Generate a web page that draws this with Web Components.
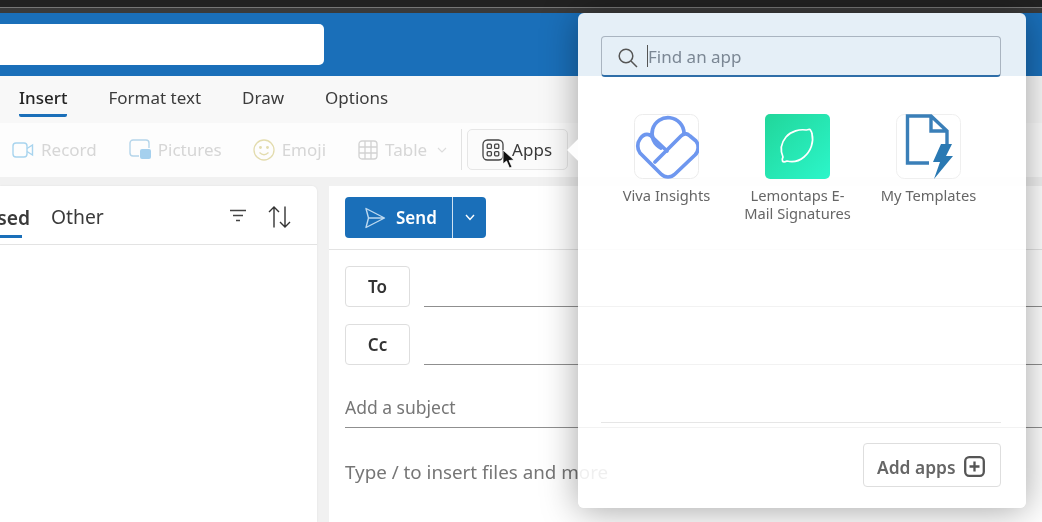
<!DOCTYPE html>
<html lang="en">
<head>
<meta charset="utf-8">
<title>Mail compose</title>
<style>
    html, body { margin: 0; padding: 0; background: #f1f1f1; overflow: hidden; }
    body { font-family: "Noto Sans", "Open Sans", sans-serif; }
</style>
</head>
<body>
<outlook-app>
    <blue-header slot="header"></blue-header>
    <ribbon-tabs slot="tabs"></ribbon-tabs>
    <ribbon-toolbar slot="toolbar"></ribbon-toolbar>
    <list-pane slot="list"></list-pane>
    <compose-pane slot="compose"></compose-pane>
    <app-picker slot="popup"></app-picker>
</outlook-app>

<script>
class OutlookApp extends HTMLElement {
    constructor() {
        super();
        this.attachShadow({ mode: 'open' });
        this.shadowRoot.innerHTML = `
            <style>
                :host {
                    display: flex;
                    flex-direction: column;
                    position: relative;
                    width: 1042px;
                    height: 522px;
                    overflow: hidden;
                    background: #f1f1f1;
                    filter: blur(0.4px);
                }
                .chrome {
                    height: 13px;
                    flex: none;
                    box-sizing: border-box;
                    background: linear-gradient(#222 0 7px, #777 7px 8px, #3a3a3a 8px);
                }
                .work {
                    flex: 1;
                    min-height: 0;
                    display: grid;
                    grid-template-columns: 317px 1fr;
                    gap: 12px;
                    padding-top: 9px;
                }
                .cursor {
                    position: absolute;
                    left: 502px;
                    top: 149px;
                }
            </style>
            <div class="chrome"></div>
            <slot name="header"></slot>
            <slot name="tabs"></slot>
            <slot name="toolbar"></slot>
            <div class="work">
                <slot name="list"></slot>
                <slot name="compose"></slot>
            </div>
            <slot name="popup"></slot>
            <svg class="cursor" width="14" height="22" viewBox="0 0 14 22">
                <path d="M1 1 L1 15 L4.5 12 L7.5 19 L10 18 L7 11.5 L12 11 Z" fill="#111" stroke="#fff" stroke-width="0.8"/>
            </svg>
        `;
    }
}

class BlueHeader extends HTMLElement {
    constructor() {
        super();
        this.attachShadow({ mode: 'open' });
        this.shadowRoot.innerHTML = `
            <style>
                :host {
                    display: block;
                    height: 63px;
                    box-sizing: border-box;
                    padding-top: 11px;
                    background: #1a6fb9;
                }
                .search {
                    width: 324px;
                    height: 41px;
                    background: #fff;
                    border-radius: 0 5px 5px 0;
                }
            </style>
            <div class="search"></div>
        `;
    }
}

class RibbonTabs extends HTMLElement {
    constructor() {
        super();
        this.attachShadow({ mode: 'open' });
        this.shadowRoot.innerHTML = `
            <style>
                :host {
                    display: flex;
                    gap: 41px;
                    height: 47px;
                    box-sizing: border-box;
                    padding: 10px 0 0 19px;
                    background: #f8f8f8;
                    font-size: 17px;
                    line-height: 23px;
                    color: #3c3c3c;
                }
                .active {
                    height: 31px;
                    font-weight: 500;
                    color: #242424;
                    border-bottom: 3px solid #1a6fb9;
                    border-radius: 0 0 2px 2px;
                    box-sizing: border-box;
                }
            </style>
            <span class="active">Insert</span>
            <span>Format text</span>
            <span>Draw</span>
            <span>Options</span>
        `;
    }
}

class RibbonToolbar extends HTMLElement {
    constructor() {
        super();
        this.attachShadow({ mode: 'open' });
        this.shadowRoot.innerHTML = `
            <style>
                :host {
                    display: flex;
                    align-items: center;
                    height: 54px;
                    box-sizing: border-box;
                    padding: 0 0 1px 12px;
                    background: #fdfdfd;
                    font-size: 17px;
                    color: #d6d6d6;
                }
                .item { display: flex; align-items: center; gap: 7px; margin-right: 32px; }
                .item svg { display: block; flex: none; }
                .pictures { margin-right: 31px; gap: 6px; }
                .table { margin-right: 14px; }
                .table .chev { margin-left: 3px; }
                .divider { width: 1px; height: 41px; background: #e2e2e2; margin-right: 5px; }
                .apps {
                    display: flex;
                    align-items: center;
                    gap: 8px;
                    width: 101px;
                    height: 41px;
                    box-sizing: border-box;
                    padding-left: 14px;
                    border: 1px solid #e6e6e6;
                    border-radius: 5px;
                    background: #fbfbfb;
                    color: #3a3a3a;
                }
            </style>
            <span class="item">
                <svg width="22" height="18" viewBox="0 0 22 18" fill="none" stroke="#a8d4ee" stroke-width="1.4">
                    <rect x="1" y="2" width="14" height="14" rx="3"/>
                    <path d="M15 7.5 L20.5 4 V14 L15 10.5"/>
                </svg>
                Record
            </span>
            <span class="item pictures">
                <svg width="23" height="21" viewBox="0 0 23 21" fill="none">
                    <path d="M10 17 H4 a3 3 0 0 1 -3 -3 V4 a3 3 0 0 1 3 -3 H17 a3 3 0 0 1 3 3 V9" stroke="#b5d5ea" stroke-width="1.4"/>
                    <rect x="11" y="10" width="11" height="10" rx="2" fill="#a5d0ee"/>
                </svg>
                Pictures
            </span>
            <span class="item">
                <svg width="22" height="22" viewBox="0 0 22 22" fill="none" stroke="#e3dcae" stroke-width="1.3">
                    <circle cx="11" cy="11" r="10"/>
                    <circle cx="7.5" cy="8.5" r="0.8" fill="#d8d3ad"/>
                    <circle cx="14.5" cy="8.5" r="0.8" fill="#d8d3ad"/>
                    <path d="M6.5 13.5 Q11 18 15.5 13.5"/>
                </svg>
                Emoji
            </span>
            <span class="item table">
                <svg width="20" height="20" viewBox="0 0 20 20" fill="none" stroke="#d2d2d2" stroke-width="1.3">
                    <rect x="1" y="1" width="18" height="18" rx="3"/>
                    <path d="M7 1 V19 M13 1 V19 M1 7 H19 M1 13 H19"/>
                </svg>
                Table
                <svg class="chev" width="10" height="6" viewBox="0 0 10 6" fill="none" stroke="#dcdcdc" stroke-width="1.1">
                    <path d="M1 1 L5 5 L9 1"/>
                </svg>
            </span>
            <span class="divider"></span>
            <span class="apps">
                <svg width="22" height="22" viewBox="0 0 22 22" fill="none" stroke="#444" stroke-width="1.3">
                    <rect x="1" y="1" width="20" height="20" rx="4.5"/>
                    <rect x="5.2" y="5.2" width="4.2" height="4.2" rx="1"/>
                    <rect x="12.6" y="5.2" width="4.2" height="4.2" rx="1"/>
                    <rect x="5.2" y="12.6" width="4.2" height="4.2" rx="1"/>
                    <rect x="12.6" y="12.6" width="4.2" height="4.2" rx="1"/>
                </svg>
                Apps
            </span>
        `;
    }
}

class ListPane extends HTMLElement {
    constructor() {
        super();
        this.attachShadow({ mode: 'open' });
        this.shadowRoot.innerHTML = `
            <style>
                :host {
                    display: block;
                    height: 100%;
                    background: #fff;
                    border-radius: 0 5px 0 0;
                    box-shadow: 0 0 2px rgba(0,0,0,.08);
                }
                .head {
                    display: flex;
                    align-items: center;
                    height: 59px;
                    box-sizing: border-box;
                    padding-top: 3px;
                    border-bottom: 1px solid #e3e3e3;
                    font-size: 19.3px;
                    color: #3a3a3a;
                }
                .focused {
                    display: flex;
                    justify-content: flex-end;
                    align-self: flex-start;
                    box-sizing: border-box;
                    width: 30px;
                    height: 55px;
                    padding-top: 16px;
                    line-height: 25px;
                    overflow: hidden;
                    white-space: nowrap;
                    font-weight: 600;
                    position: relative;
                }
                .focused::after {
                    content: "";
                    position: absolute;
                    left: 0;
                    bottom: 6px;
                    width: 22px;
                    height: 3px;
                    background: #1a6fb9;
                }
                .other { margin-left: 21px; }
                .filter { margin: 0 0 2px auto; }
                .sort { margin: 0 26px 0 21px; }
                svg { display: block; }
            </style>
            <div class="head">
                <span class="focused">Focused</span>
                <span class="other">Other</span>
                <svg class="filter" width="18" height="14" viewBox="0 0 18 14" fill="none" stroke="#444" stroke-width="1.3">
                    <path d="M1 1.5 H17 M4 6.5 H14 M7 11.5 H11"/>
                </svg>
                <svg class="sort" width="23" height="22" viewBox="0 0 23 22" fill="none" stroke="#333" stroke-width="1.4">
                    <path d="M6 21.5 V1 M1 6 L6 1 L11 6 M17 0.5 V21 M12 16 L17 21 L22 16"/>
                </svg>
            </div>
        `;
    }
}

class ComposePane extends HTMLElement {
    constructor() {
        super();
        this.attachShadow({ mode: 'open' });
        this.shadowRoot.innerHTML = `
            <style>
                :host {
                    display: block;
                    height: 100%;
                    background: #fff;
                    font-size: 17px;
                    color: #666;
                }
                .bar {
                    height: 64px;
                    box-sizing: border-box;
                    padding: 11px 0 0 16px;
                    border-bottom: 1px solid #e3e3e3;
                }
                .send {
                    display: inline-flex;
                    width: 141px;
                    height: 41px;
                    border-radius: 4px;
                    background: #1a6fb9;
                    color: #fff;
                    font-weight: 600;
                }
                .send-main {
                    display: flex;
                    align-items: center;
                    gap: 10px;
                    width: 108px;
                    box-sizing: border-box;
                    padding-left: 19px;
                    border-right: 1px solid #cfe2f2;
                }
                .send-drop {
                    flex: 1;
                    display: flex;
                    align-items: center;
                    justify-content: center;
                }
                .rows { padding-left: 16px; }
                .row {
                    display: flex;
                    align-items: stretch;
                    gap: 14px;
                    height: 41px;
                    margin-top: 17px;
                }
                .row.first { margin-top: 16px; }
                .label {
                    width: 65px;
                    box-sizing: border-box;
                    display: flex;
                    align-items: center;
                    justify-content: center;
                    border: 1px solid #dedede;
                    border-radius: 4px;
                    font-weight: 600;
                    color: #333;
                }
                .line { flex: 1; border-bottom: 1px solid #8f8f8f; }
                .subject {
                    height: 47px;
                    margin-top: 16px;
                    box-sizing: border-box;
                    padding-top: 16px;
                    line-height: 20px;
                    font-size: 17.5px;
                    border-bottom: 1px solid #8f8f8f;
                    color: #767676;
                }
                .body { margin-top: 33px; line-height: 22px; font-size: 18.8px; color: #767676; white-space: nowrap; }
            </style>
            <div class="bar">
                <div class="send">
                    <span class="send-main">
                        <svg width="22" height="22" viewBox="0 0 22 22" fill="none" stroke="#bcd9f0" stroke-width="1.4" stroke-linejoin="round">
                            <path d="M2 1.5 L20.5 11 L2 20.5 L4.5 11 Z M4.5 11 H20.5"/>
                        </svg>
                        Send
                    </span>
                    <span class="send-drop">
                        <svg width="10" height="7" viewBox="0 0 10 7" fill="none" stroke="#fff" stroke-width="1.4"><path d="M1 1 L5 5.5 L9 1"/></svg>
                    </span>
                </div>
            </div>
            <div class="rows">
                <div class="row first"><span class="label">To</span><span class="line"></span></div>
                <div class="row"><span class="label">Cc</span><span class="line"></span></div>
                <div class="subject">Add a subject</div>
                <div class="body">Type / to insert files and more</div>
            </div>
        `;
    }
}

class AppTile extends HTMLElement {
    constructor() {
        super();
        this.attachShadow({ mode: 'open' });
        this.shadowRoot.innerHTML = `
            <style>
                :host {
                    display: flex;
                    flex-direction: column;
                    align-items: center;
                    width: 131px;
                    font-size: 14.7px;
                    line-height: 18px;
                    color: #666;
                    text-align: center;
                }
                .icon {
                    width: 65px;
                    height: 65px;
                    box-sizing: border-box;
                    margin-bottom: 7px;
                }
                .label { width: 116px; }
            </style>
            <div class="icon"><slot name="icon"></slot></div>
            <div class="label"><slot></slot></div>
        `;
    }
}

class AppPicker extends HTMLElement {
    constructor() {
        super();
        this.attachShadow({ mode: 'open' });
        this.shadowRoot.innerHTML = `
            <style>
                :host {
                    position: absolute;
                    left: 578px;
                    top: 13px;
                    width: 448px;
                    height: 495px;
                    box-sizing: border-box;
                    padding: 23px 25px 21px 23px;
                    display: flex;
                    flex-direction: column;
                    background: rgba(255,255,255,.885);
                    border-radius: 6px;
                    box-shadow: 0 2px 36px rgba(0,0,0,.36);
                }
                .beak {
                    position: absolute;
                    left: -8px;
                    top: 129px;
                    width: 16px;
                    height: 16px;
                    background: #fdfdfd;
                    transform: rotate(45deg);
                    clip-path: polygon(0 0, 0 100%, 100% 100%);
                }
                .find {
                    display: flex;
                    align-items: center;
                    height: 41px;
                    flex: none;
                    box-sizing: border-box;
                    padding-left: 16px;
                    border: 1px solid #a9b4c0;
                    border-bottom: 2px solid #2f6ea8;
                    border-radius: 4px;
                    font-size: 17px;
                    color: #7b8794;
                }
                .find svg { margin-top: 3px; }
                .caret { width: 1px; height: 22px; background: #555; margin: 0 0 0 9px; }
                .grid {
                    display: flex;
                    margin: 37px 0 0 0;
                    flex: 1;
                }
                .foot {
                    flex: none;
                    display: flex;
                    justify-content: flex-end;
                    border-top: 1px solid #e6e6e6;
                    padding-top: 20px;
                }
                .add {
                    display: flex;
                    align-items: center;
                    gap: 8px;
                    width: 138px;
                    height: 44px;
                    box-sizing: border-box;
                    padding: 3px 0 0 13px;
                    border: 1px solid #dedede;
                    border-radius: 4px;
                    background: #fff;
                    font-size: 17.4px;
                    font-weight: 600;
                    color: #666;
                }
                .tile {
                    display: block;
                    width: 65px;
                    height: 65px;
                }
            </style>
            <div class="beak"></div>
            <div class="find">
                <svg width="20" height="20" viewBox="0 0 20 20" fill="none" stroke="#555" stroke-width="1.5">
                    <circle cx="8" cy="8" r="6.8"/><path d="M13 13 L19 19"/>
                </svg>
                <span class="caret"></span>
                <span>Find an app</span>
            </div>
            <div class="grid">
                <app-tile>
                    <svg slot="icon" class="tile" viewBox="0 0 65 65" fill="none">
                        <rect x="0.5" y="0.5" width="64" height="64" rx="8" fill="#fff" stroke="#ececec"/>
                        <g stroke="#6e97ef" stroke-width="3.7" stroke-linejoin="round" stroke-linecap="round">
                            <path d="M16 21 C11 19 8 22 6 25 C3 29 3 35 6 39 L27 60 C31 64 37 64 41 60 L61 41 C65 37 65 31 62 27 L56 22 C53 19 50 19 47 22 L21 48"/>
                            <path d="M16 21 L33 37"/>
                            <path d="M27 34 A16 16 0 1 1 50 19"/>
                        </g>
                    </svg>
                    Viva Insights
                </app-tile>
                <app-tile>
                    <svg slot="icon" class="tile" viewBox="0 0 65 65" fill="none">
                        <defs>
                            <linearGradient id="lemon" x1="0" y1="0" x2="1" y2="1">
                                <stop offset="0" stop-color="#21d69a"/>
                                <stop offset="1" stop-color="#2cf6ca"/>
                            </linearGradient>
                        </defs>
                        <rect width="65" height="65" rx="5" fill="url(#lemon)"/>
                        <path d="M45 15.5 C46 17 47 18 47 20 C49 28 46 37 39 43 C33 48 26 48 22 47 C20 48 18 48 17.5 47 C17 46 17.5 44 18 43 C15 36 16 29 21 23 C26 17 35 15 41 16 C42 16 44 15 45 15.5 Z" stroke="#fff" stroke-width="1.7" stroke-linejoin="round"/>
                    </svg>
                    Lemontaps E-Mail Signatures
                </app-tile>
                <app-tile>
                    <svg slot="icon" class="tile" viewBox="0 0 65 65" fill="none">
                        <rect x="0.5" y="0.5" width="64" height="64" rx="8" fill="#fff" stroke="#efefef"/>
                        <path d="M33 49 H11.5 V2 H35 L51 17 V30 M35 2 V17 H51" stroke="#3a7fb8" stroke-width="3.4"/>
                        <path d="M45 30 H56 L50 42 H57 L38 65 L44 48 H37 Z" fill="#2a79b3"/>
                    </svg>
                    My Templates
                </app-tile>
            </div>
            <div class="foot">
                <span class="add">
                    Add apps
                    <svg width="21" height="21" viewBox="0 0 21 21" fill="none" stroke="#555" stroke-width="2.3">
                        <rect x="1.2" y="1.2" width="18.6" height="18.6" rx="4"/>
                        <path d="M10.5 5.5 V15.5 M5.5 10.5 H15.5"/>
                    </svg>
                </span>
            </div>
        `;
    }
}

customElements.define('outlook-app', OutlookApp);
customElements.define('blue-header', BlueHeader);
customElements.define('ribbon-tabs', RibbonTabs);
customElements.define('ribbon-toolbar', RibbonToolbar);
customElements.define('list-pane', ListPane);
customElements.define('compose-pane', ComposePane);
customElements.define('app-tile', AppTile);
customElements.define('app-picker', AppPicker);
</script>
</body>
</html>
